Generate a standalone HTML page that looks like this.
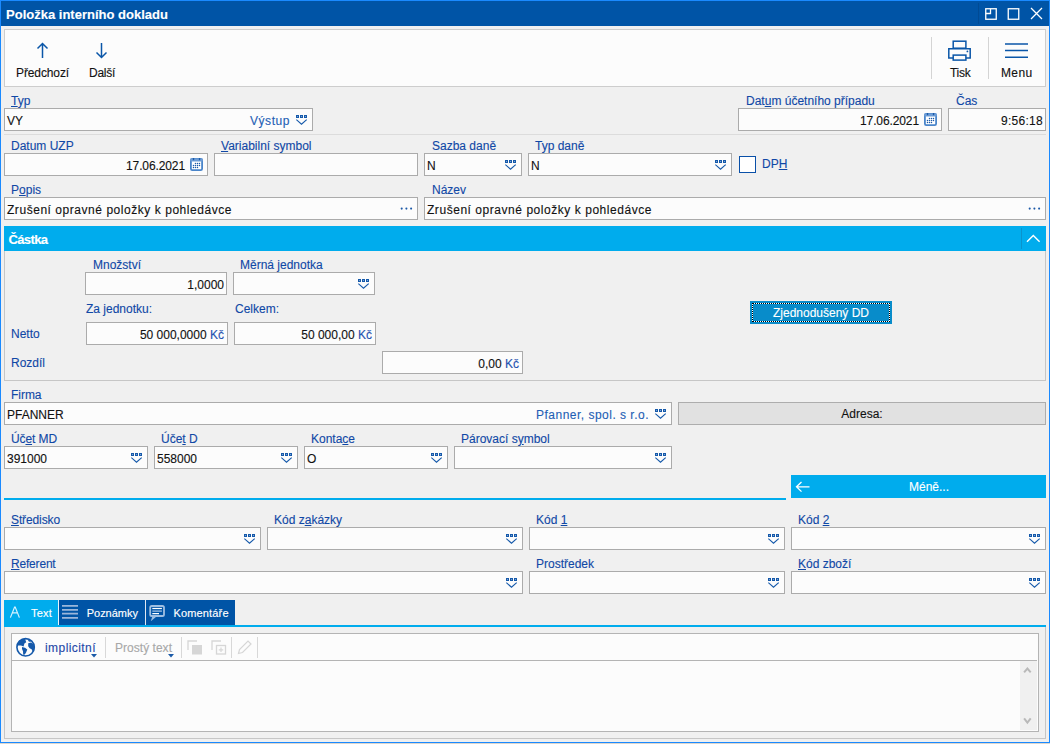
<!DOCTYPE html><html><head><meta charset="utf-8"><style>
html,body{margin:0;padding:0;width:1050px;height:744px;overflow:hidden;background:#f0f0f0;}
body{position:relative;font-family:"Liberation Sans", sans-serif;}
.a{position:absolute;box-sizing:border-box;}
.t{white-space:pre;-webkit-text-stroke:0.12px currentColor;}
u{text-decoration:underline;text-underline-offset:1px;}
</style></head><body>
<div class="a" style="left:0px;top:0px;width:1050px;height:743px;background:#f0f0f0;border:1px solid #1a8aff;"></div>
<div class="a" style="left:0px;top:743px;width:1050px;height:1px;background:#ddd6cd;"></div>
<div class="a" style="left:1px;top:1px;width:1048px;height:25px;background:#0054a6;"></div>
<div class="a t" style="letter-spacing:0.008px;top:7.50px;font-size:13px;line-height:13px;color:#fff;font-weight:bold;left:6px;">Položka interního dokladu</div>
<div class="a" style="left:978px;top:3px;width:1px;height:21px;background:#004a94;"></div>
<svg class="a" style="left:985px;top:8px;" width="12" height="12" viewBox="0 0 12 12"><rect x="0.75" y="0.75" width="10.5" height="10.5" fill="none" stroke="#fff" stroke-width="1.3"/><path d="M0.75 5.5 H5.5 V0.75" fill="none" stroke="#fff" stroke-width="1.3"/></svg>
<svg class="a" style="left:1007px;top:8px;" width="13" height="12" viewBox="0 0 13 12"><rect x="1.25" y="0.75" width="10.5" height="10.5" fill="none" stroke="#fff" stroke-width="1.3"/></svg>
<svg class="a" style="left:1030px;top:7px;" width="13" height="13" viewBox="0 0 13 13"><path d="M1 1 L12 12 M12 1 L1 12" stroke="#fff" stroke-width="1.3"/></svg>
<div class="a" style="left:4px;top:29px;width:1042px;height:58px;background:#fcfcfc;border:1px solid #cdcdcd;"></div>
<svg class="a" style="left:36px;top:42px;" width="14" height="17" viewBox="0 0 14 17"><path d="M6.5 1.5 V16 M1.5 6.5 L6.5 1.5 L11.5 6.5" fill="none" stroke="#0a56a8" stroke-width="1.5"/></svg>
<svg class="a" style="left:95px;top:42px;" width="14" height="17" viewBox="0 0 14 17"><path d="M6.5 1 V15.5 M1.5 10.5 L6.5 15.5 L11.5 10.5" fill="none" stroke="#0a56a8" stroke-width="1.5"/></svg>
<div class="a t" style="letter-spacing:-0.115px;top:67.14px;font-size:12px;line-height:12px;color:#111;font-weight:normal;left:16px;">Předchozí</div>
<div class="a t" style="letter-spacing:-0.269px;top:67.14px;font-size:12px;line-height:12px;color:#111;font-weight:normal;left:89px;">Další</div>
<div class="a" style="left:931px;top:37px;width:1px;height:42px;background:#d4d4d4;"></div>
<div class="a" style="left:988px;top:37px;width:1px;height:42px;background:#d4d4d4;"></div>
<svg class="a" style="left:947px;top:39px;" width="25" height="23" viewBox="0 0 25 23"><g fill="none" stroke="#0a56a8" stroke-width="1.5"><rect x="6.2" y="2.2" width="12.7" height="7"/><path d="M6.2 18.9 H1.8 V9.7 H23.2 V18.9 H18.9"/><rect x="6.2" y="16.1" width="12.7" height="5"/></g><circle cx="20.4" cy="12.4" r="0.9" fill="#0a56a8"/></svg>
<svg class="a" style="left:1004px;top:42px;" width="25" height="17" viewBox="0 0 25 17"><g stroke="#0a56a8" stroke-width="1.5"><path d="M1 2 H24 M1 8.6 H24 M1 15.2 H24"/></g></svg>
<div class="a t" style="letter-spacing:-0.266px;top:67.14px;font-size:12px;line-height:12px;color:#111;font-weight:normal;left:950px;">Tisk</div>
<div class="a t" style="letter-spacing:0.367px;top:67.14px;font-size:12px;line-height:12px;color:#111;font-weight:normal;left:1001px;">Menu</div>
<div class="a t" style="top:94.84px;font-size:12px;line-height:12px;color:#1048a6;font-weight:normal;left:11px;"><u>T</u>yp</div>
<div class="a" style="left:4px;top:108px;width:309px;height:23px;background:#fcfcfc;border:1px solid #ababab;"></div>
<div class="a t" style="top:114.54px;font-size:12px;line-height:12px;color:#111;font-weight:normal;left:7px;">VY</div>
<div class="a t" style="letter-spacing:0.552px;top:114.54px;font-size:12px;line-height:12px;color:#1f5fb5;font-weight:normal;right:760px;">Výstup</div>
<svg class="a" style="left:296px;top:115px;" width="12" height="11" viewBox="0 0 12 11"><g fill="#1559aa"><rect x="0" y="0" width="3" height="3"/><rect x="4" y="0" width="3" height="3"/><rect x="8" y="0" width="3" height="3"/></g><g fill="#7aa3d6"><rect x="1" y="1" width="1" height="1"/><rect x="5" y="1" width="1" height="1"/><rect x="9" y="1" width="1" height="1"/></g><path d="M0.3 4.6 L5.5 9.3 L10.7 4.6" fill="none" stroke="#1559aa" stroke-width="1.15"/></svg>
<div class="a t" style="top:94.84px;font-size:12px;line-height:12px;color:#1048a6;font-weight:normal;left:746px;">Dat<u>u</u>m účetního případu</div>
<div class="a" style="left:738px;top:108px;width:204px;height:23px;background:#fcfcfc;border:1px solid #ababab;"></div>
<div class="a t" style="letter-spacing:-0.106px;top:114.54px;font-size:12px;line-height:12px;color:#111;font-weight:normal;right:131px;">17.06.2021</div>
<svg class="a" style="left:924px;top:113px;" width="13" height="13" viewBox="0 0 13 13"><rect x="0.9" y="0.9" width="11.2" height="11.2" rx="1.3" fill="#fff" stroke="#4a85ca" stroke-width="1.8"/><rect x="0.2" y="0.4" width="12.6" height="3.2" rx="1" fill="#6e9dd6"/><rect x="2.9" y="0" width="1.3" height="2.2" fill="#1d5ba8"/><rect x="8.9" y="0" width="1.3" height="2.2" fill="#1d5ba8"/><g fill="#1d5ba8"><circle cx="5.5" cy="5.5" r="0.72"/><circle cx="7.5" cy="5.5" r="0.72"/><circle cx="9.5" cy="5.5" r="0.72"/><circle cx="3.5" cy="7.5" r="0.72"/><circle cx="5.5" cy="7.5" r="0.72"/><circle cx="7.5" cy="7.5" r="0.72"/><circle cx="9.5" cy="7.5" r="0.72"/><circle cx="3.5" cy="9.5" r="0.72"/><circle cx="5.5" cy="9.5" r="0.72"/><circle cx="7.5" cy="9.5" r="0.72"/></g></svg>
<div class="a t" style="top:94.84px;font-size:12px;line-height:12px;color:#1048a6;font-weight:normal;left:956px;">Čas</div>
<div class="a" style="left:948px;top:108px;width:98px;height:23px;background:#fcfcfc;border:1px solid #ababab;"></div>
<div class="a t" style="letter-spacing:0.279px;top:114.54px;font-size:12px;line-height:12px;color:#111;font-weight:normal;right:7px;">9:56:18</div>
<div class="a" style="left:4px;top:134px;width:1042px;height:1px;background:#dcdcdc;"></div>
<div class="a t" style="top:139.84px;font-size:12px;line-height:12px;color:#1048a6;font-weight:normal;left:11px;">Datum UZP</div>
<div class="a" style="left:4px;top:153px;width:204px;height:23px;background:#fcfcfc;border:1px solid #ababab;"></div>
<div class="a t" style="letter-spacing:-0.106px;top:159.54px;font-size:12px;line-height:12px;color:#111;font-weight:normal;right:865px;">17.06.2021</div>
<svg class="a" style="left:190px;top:158px;" width="13" height="13" viewBox="0 0 13 13"><rect x="0.9" y="0.9" width="11.2" height="11.2" rx="1.3" fill="#fff" stroke="#4a85ca" stroke-width="1.8"/><rect x="0.2" y="0.4" width="12.6" height="3.2" rx="1" fill="#6e9dd6"/><rect x="2.9" y="0" width="1.3" height="2.2" fill="#1d5ba8"/><rect x="8.9" y="0" width="1.3" height="2.2" fill="#1d5ba8"/><g fill="#1d5ba8"><circle cx="5.5" cy="5.5" r="0.72"/><circle cx="7.5" cy="5.5" r="0.72"/><circle cx="9.5" cy="5.5" r="0.72"/><circle cx="3.5" cy="7.5" r="0.72"/><circle cx="5.5" cy="7.5" r="0.72"/><circle cx="7.5" cy="7.5" r="0.72"/><circle cx="9.5" cy="7.5" r="0.72"/><circle cx="3.5" cy="9.5" r="0.72"/><circle cx="5.5" cy="9.5" r="0.72"/><circle cx="7.5" cy="9.5" r="0.72"/></g></svg>
<div class="a t" style="top:139.84px;font-size:12px;line-height:12px;color:#1048a6;font-weight:normal;left:221px;"><u>V</u>ariabilní symbol</div>
<div class="a" style="left:214px;top:153px;width:204px;height:23px;background:#fcfcfc;border:1px solid #ababab;"></div>
<div class="a t" style="top:139.84px;font-size:12px;line-height:12px;color:#1048a6;font-weight:normal;left:432px;">Sazba daně</div>
<div class="a" style="left:424px;top:153px;width:98px;height:23px;background:#fcfcfc;border:1px solid #ababab;"></div>
<div class="a t" style="top:159.54px;font-size:12px;line-height:12px;color:#111;font-weight:normal;left:427px;">N</div>
<svg class="a" style="left:505px;top:160px;" width="12" height="11" viewBox="0 0 12 11"><g fill="#1559aa"><rect x="0" y="0" width="3" height="3"/><rect x="4" y="0" width="3" height="3"/><rect x="8" y="0" width="3" height="3"/></g><g fill="#7aa3d6"><rect x="1" y="1" width="1" height="1"/><rect x="5" y="1" width="1" height="1"/><rect x="9" y="1" width="1" height="1"/></g><path d="M0.3 4.6 L5.5 9.3 L10.7 4.6" fill="none" stroke="#1559aa" stroke-width="1.15"/></svg>
<div class="a t" style="top:139.84px;font-size:12px;line-height:12px;color:#1048a6;font-weight:normal;left:535px;">Typ daně</div>
<div class="a" style="left:528px;top:153px;width:204px;height:23px;background:#fcfcfc;border:1px solid #ababab;"></div>
<div class="a t" style="top:159.54px;font-size:12px;line-height:12px;color:#111;font-weight:normal;left:531px;">N</div>
<svg class="a" style="left:715px;top:160px;" width="12" height="11" viewBox="0 0 12 11"><g fill="#1559aa"><rect x="0" y="0" width="3" height="3"/><rect x="4" y="0" width="3" height="3"/><rect x="8" y="0" width="3" height="3"/></g><g fill="#7aa3d6"><rect x="1" y="1" width="1" height="1"/><rect x="5" y="1" width="1" height="1"/><rect x="9" y="1" width="1" height="1"/></g><path d="M0.3 4.6 L5.5 9.3 L10.7 4.6" fill="none" stroke="#1559aa" stroke-width="1.15"/></svg>
<div class="a" style="left:739px;top:156px;width:17px;height:17px;background:#fff;border:1px solid #0a50a8;"></div>
<div class="a t" style="top:158.44px;font-size:12px;line-height:12px;color:#1048a6;font-weight:normal;left:762px;">DP<u>H</u></div>
<div class="a t" style="top:184.14px;font-size:12px;line-height:12px;color:#1048a6;font-weight:normal;left:11px;">P<u>o</u>pis</div>
<div class="a" style="left:4px;top:197px;width:414px;height:23px;background:#fcfcfc;border:1px solid #ababab;"></div>
<div class="a t" style="letter-spacing:0.543px;top:203.84px;font-size:12px;line-height:12px;color:#111;font-weight:normal;left:7px;">Zrušení opravné položky k pohledávce</div>
<svg class="a" style="left:400px;top:207px;" width="13" height="4" viewBox="0 0 13 4"><circle cx="1.70" cy="1.6" r="1.05" fill="#1d5aa8"/><circle cx="6.40" cy="1.6" r="1.05" fill="#1d5aa8"/><circle cx="11.10" cy="1.6" r="1.05" fill="#1d5aa8"/></svg>
<div class="a t" style="top:184.14px;font-size:12px;line-height:12px;color:#1048a6;font-weight:normal;left:432px;">Název</div>
<div class="a" style="left:424px;top:197px;width:622px;height:23px;background:#fcfcfc;border:1px solid #ababab;"></div>
<div class="a t" style="letter-spacing:0.543px;top:203.84px;font-size:12px;line-height:12px;color:#111;font-weight:normal;left:427px;">Zrušení opravné položky k pohledávce</div>
<svg class="a" style="left:1028px;top:207px;" width="13" height="4" viewBox="0 0 13 4"><circle cx="1.70" cy="1.6" r="1.05" fill="#1d5aa8"/><circle cx="6.40" cy="1.6" r="1.05" fill="#1d5aa8"/><circle cx="11.10" cy="1.6" r="1.05" fill="#1d5aa8"/></svg>
<div class="a" style="left:4px;top:226px;width:1042px;height:25px;background:#00aced;"></div>
<div class="a t" style="letter-spacing:-0.607px;top:232.70px;font-size:13px;line-height:13px;color:#fff;font-weight:bold;left:8.4px;">Částka</div>
<div class="a" style="left:1021px;top:228px;width:1px;height:21px;background:#0a93cc;"></div>
<svg class="a" style="left:1026px;top:234px;" width="15" height="9" viewBox="0 0 15 9"><path d="M1 7.8 L7.3 1.5 L13.6 7.8" fill="none" stroke="#fff" stroke-width="1.4"/></svg>
<div class="a" style="left:4px;top:251px;width:1042px;height:130px;box-sizing:border-box;border:1px solid #c6c6c6;border-top:none"></div>
<div class="a t" style="top:258.84px;font-size:12px;line-height:12px;color:#1048a6;font-weight:normal;left:93px;">Množství</div>
<div class="a" style="left:85px;top:272px;width:142px;height:23px;background:#fcfcfc;border:1px solid #ababab;"></div>
<div class="a t" style="top:278.84px;font-size:12px;line-height:12px;color:#111;font-weight:normal;right:826px;">1,0000</div>
<div class="a t" style="top:258.84px;font-size:12px;line-height:12px;color:#1048a6;font-weight:normal;left:240px;">Měrná jednotka</div>
<div class="a" style="left:233px;top:272px;width:142px;height:23px;background:#fcfcfc;border:1px solid #ababab;"></div>
<svg class="a" style="left:358px;top:279px;" width="12" height="11" viewBox="0 0 12 11"><g fill="#1559aa"><rect x="0" y="0" width="3" height="3"/><rect x="4" y="0" width="3" height="3"/><rect x="8" y="0" width="3" height="3"/></g><g fill="#7aa3d6"><rect x="1" y="1" width="1" height="1"/><rect x="5" y="1" width="1" height="1"/><rect x="9" y="1" width="1" height="1"/></g><path d="M0.3 4.6 L5.5 9.3 L10.7 4.6" fill="none" stroke="#1559aa" stroke-width="1.15"/></svg>
<div class="a t" style="top:302.84px;font-size:12px;line-height:12px;color:#1048a6;font-weight:normal;left:86px;">Za jednotku:</div>
<div class="a t" style="top:302.84px;font-size:12px;line-height:12px;color:#1048a6;font-weight:normal;left:235px;">Celkem:</div>
<div class="a t" style="top:327.84px;font-size:12px;line-height:12px;color:#1048a6;font-weight:normal;left:11px;">Netto</div>
<div class="a" style="left:86px;top:322px;width:142px;height:23px;background:#fcfcfc;border:1px solid #ababab;"></div>

<div class="a t" style="top:328.84px;font-size:12px;line-height:12px;color:#111;font-weight:normal;right:826px;">50 000,0000 <span style="color:#2452b0">Kč</span></div>
<div class="a" style="left:234px;top:322px;width:142px;height:23px;background:#fcfcfc;border:1px solid #ababab;"></div>
<div class="a t" style="top:328.84px;font-size:12px;line-height:12px;color:#111;font-weight:normal;right:678px;">50 000,00 <span style="color:#2452b0">Kč</span></div>
<div class="a t" style="top:356.84px;font-size:12px;line-height:12px;color:#1048a6;font-weight:normal;left:11px;">Rozdíl</div>
<div class="a" style="left:382px;top:351px;width:141px;height:23px;background:#fcfcfc;border:1px solid #ababab;"></div>
<div class="a t" style="top:357.84px;font-size:12px;line-height:12px;color:#111;font-weight:normal;right:531px;">0,00 <span style="color:#2452b0">Kč</span></div>
<div class="a" style="left:750px;top:301px;width:142px;height:23px;background:#088cca;"></div>
<div class="a" style="left:752px;top:303px;width:138px;height:19px;border:1px solid #fff"></div>
<div class="a" style="left:752px;top:303px;width:138px;height:19px;border:1px dotted #000"></div>
<div class="a t" style="letter-spacing:-0.004px;top:306.84px;font-size:12px;line-height:12px;color:#fff;font-weight:normal;left:821px;transform:translateX(-50%);">Zjednodušený DD</div>
<div class="a t" style="letter-spacing:-0.034px;top:388.54px;font-size:12px;line-height:12px;color:#1048a6;font-weight:normal;left:11px;">Firma</div>
<div class="a" style="left:4px;top:402px;width:668px;height:23px;background:#fcfcfc;border:1px solid #ababab;"></div>
<div class="a t" style="top:408.84px;font-size:12px;line-height:12px;color:#111;font-weight:normal;left:7px;">PFANNER</div>
<div class="a t" style="letter-spacing:0.489px;top:408.84px;font-size:12px;line-height:12px;color:#1f5fb5;font-weight:normal;right:401px;">Pfanner, spol. s r.o.</div>
<svg class="a" style="left:655px;top:409px;" width="12" height="11" viewBox="0 0 12 11"><g fill="#1559aa"><rect x="0" y="0" width="3" height="3"/><rect x="4" y="0" width="3" height="3"/><rect x="8" y="0" width="3" height="3"/></g><g fill="#7aa3d6"><rect x="1" y="1" width="1" height="1"/><rect x="5" y="1" width="1" height="1"/><rect x="9" y="1" width="1" height="1"/></g><path d="M0.3 4.6 L5.5 9.3 L10.7 4.6" fill="none" stroke="#1559aa" stroke-width="1.15"/></svg>
<div class="a" style="left:678px;top:402px;width:368px;height:23px;background:#e1e1e1;border:1px solid #adadad;"></div>
<div class="a t" style="top:407.84px;font-size:12px;line-height:12px;color:#111;font-weight:normal;left:862px;transform:translateX(-50%);">Adresa:</div>
<div class="a t" style="letter-spacing:-0.100px;top:433.24px;font-size:12px;line-height:12px;color:#1048a6;font-weight:normal;left:11px;">Úč<u>e</u>t MD</div>
<div class="a" style="left:4px;top:446px;width:144px;height:23px;background:#fcfcfc;border:1px solid #ababab;"></div>
<div class="a t" style="top:452.84px;font-size:12px;line-height:12px;color:#111;font-weight:normal;left:7px;">391000</div>
<svg class="a" style="left:131px;top:453px;" width="12" height="11" viewBox="0 0 12 11"><g fill="#1559aa"><rect x="0" y="0" width="3" height="3"/><rect x="4" y="0" width="3" height="3"/><rect x="8" y="0" width="3" height="3"/></g><g fill="#7aa3d6"><rect x="1" y="1" width="1" height="1"/><rect x="5" y="1" width="1" height="1"/><rect x="9" y="1" width="1" height="1"/></g><path d="M0.3 4.6 L5.5 9.3 L10.7 4.6" fill="none" stroke="#1559aa" stroke-width="1.15"/></svg>
<div class="a t" style="top:433.24px;font-size:12px;line-height:12px;color:#1048a6;font-weight:normal;left:161px;">Úče<u>t</u> D</div>
<div class="a" style="left:154px;top:446px;width:144px;height:23px;background:#fcfcfc;border:1px solid #ababab;"></div>
<div class="a t" style="top:452.84px;font-size:12px;line-height:12px;color:#111;font-weight:normal;left:157px;">558000</div>
<svg class="a" style="left:281px;top:453px;" width="12" height="11" viewBox="0 0 12 11"><g fill="#1559aa"><rect x="0" y="0" width="3" height="3"/><rect x="4" y="0" width="3" height="3"/><rect x="8" y="0" width="3" height="3"/></g><g fill="#7aa3d6"><rect x="1" y="1" width="1" height="1"/><rect x="5" y="1" width="1" height="1"/><rect x="9" y="1" width="1" height="1"/></g><path d="M0.3 4.6 L5.5 9.3 L10.7 4.6" fill="none" stroke="#1559aa" stroke-width="1.15"/></svg>
<div class="a t" style="top:433.24px;font-size:12px;line-height:12px;color:#1048a6;font-weight:normal;left:311px;">Konta<u>c</u>e</div>
<div class="a" style="left:304px;top:446px;width:144px;height:23px;background:#fcfcfc;border:1px solid #ababab;"></div>
<div class="a t" style="top:452.84px;font-size:12px;line-height:12px;color:#111;font-weight:normal;left:307px;">O</div>
<svg class="a" style="left:431px;top:453px;" width="12" height="11" viewBox="0 0 12 11"><g fill="#1559aa"><rect x="0" y="0" width="3" height="3"/><rect x="4" y="0" width="3" height="3"/><rect x="8" y="0" width="3" height="3"/></g><g fill="#7aa3d6"><rect x="1" y="1" width="1" height="1"/><rect x="5" y="1" width="1" height="1"/><rect x="9" y="1" width="1" height="1"/></g><path d="M0.3 4.6 L5.5 9.3 L10.7 4.6" fill="none" stroke="#1559aa" stroke-width="1.15"/></svg>
<div class="a t" style="top:433.24px;font-size:12px;line-height:12px;color:#1048a6;font-weight:normal;left:461px;">Párovací s<u>y</u>mbol</div>
<div class="a" style="left:454px;top:446px;width:218px;height:23px;background:#fcfcfc;border:1px solid #ababab;"></div>
<svg class="a" style="left:655px;top:453px;" width="12" height="11" viewBox="0 0 12 11"><g fill="#1559aa"><rect x="0" y="0" width="3" height="3"/><rect x="4" y="0" width="3" height="3"/><rect x="8" y="0" width="3" height="3"/></g><g fill="#7aa3d6"><rect x="1" y="1" width="1" height="1"/><rect x="5" y="1" width="1" height="1"/><rect x="9" y="1" width="1" height="1"/></g><path d="M0.3 4.6 L5.5 9.3 L10.7 4.6" fill="none" stroke="#1559aa" stroke-width="1.15"/></svg>
<div class="a" style="left:791px;top:475px;width:255px;height:23px;background:#00aced;"></div>
<svg class="a" style="left:795px;top:481px;" width="16" height="12" viewBox="0 0 16 12"><path d="M1.5 5.8 H14.5 M6.5 1 L1.5 5.8 L6.5 10.6" fill="none" stroke="#fff" stroke-width="1.3"/></svg>
<div class="a t" style="top:481.34px;font-size:12px;line-height:12px;color:#fff;font-weight:normal;left:929px;transform:translateX(-50%);">Méně...</div>
<div class="a" style="left:4px;top:498px;width:782px;height:2px;background:#00aced;"></div>
<div class="a t" style="letter-spacing:-0.116px;top:514.04px;font-size:12px;line-height:12px;color:#1048a6;font-weight:normal;left:11px;"><u>S</u>tředisko</div>
<div class="a" style="left:4px;top:527px;width:257px;height:23px;background:#fcfcfc;border:1px solid #ababab;"></div>
<svg class="a" style="left:244px;top:534px;" width="12" height="11" viewBox="0 0 12 11"><g fill="#1559aa"><rect x="0" y="0" width="3" height="3"/><rect x="4" y="0" width="3" height="3"/><rect x="8" y="0" width="3" height="3"/></g><g fill="#7aa3d6"><rect x="1" y="1" width="1" height="1"/><rect x="5" y="1" width="1" height="1"/><rect x="9" y="1" width="1" height="1"/></g><path d="M0.3 4.6 L5.5 9.3 L10.7 4.6" fill="none" stroke="#1559aa" stroke-width="1.15"/></svg>
<div class="a t" style="top:514.04px;font-size:12px;line-height:12px;color:#1048a6;font-weight:normal;left:274px;">Kód z<u>a</u>kázky</div>
<div class="a" style="left:267px;top:527px;width:256px;height:23px;background:#fcfcfc;border:1px solid #ababab;"></div>
<svg class="a" style="left:506px;top:534px;" width="12" height="11" viewBox="0 0 12 11"><g fill="#1559aa"><rect x="0" y="0" width="3" height="3"/><rect x="4" y="0" width="3" height="3"/><rect x="8" y="0" width="3" height="3"/></g><g fill="#7aa3d6"><rect x="1" y="1" width="1" height="1"/><rect x="5" y="1" width="1" height="1"/><rect x="9" y="1" width="1" height="1"/></g><path d="M0.3 4.6 L5.5 9.3 L10.7 4.6" fill="none" stroke="#1559aa" stroke-width="1.15"/></svg>
<div class="a t" style="top:514.04px;font-size:12px;line-height:12px;color:#1048a6;font-weight:normal;left:536px;">Kód <u>1</u></div>
<div class="a" style="left:529px;top:527px;width:256px;height:23px;background:#fcfcfc;border:1px solid #ababab;"></div>
<svg class="a" style="left:768px;top:534px;" width="12" height="11" viewBox="0 0 12 11"><g fill="#1559aa"><rect x="0" y="0" width="3" height="3"/><rect x="4" y="0" width="3" height="3"/><rect x="8" y="0" width="3" height="3"/></g><g fill="#7aa3d6"><rect x="1" y="1" width="1" height="1"/><rect x="5" y="1" width="1" height="1"/><rect x="9" y="1" width="1" height="1"/></g><path d="M0.3 4.6 L5.5 9.3 L10.7 4.6" fill="none" stroke="#1559aa" stroke-width="1.15"/></svg>
<div class="a t" style="top:514.04px;font-size:12px;line-height:12px;color:#1048a6;font-weight:normal;left:798px;">Kód <u>2</u></div>
<div class="a" style="left:791px;top:527px;width:255px;height:23px;background:#fcfcfc;border:1px solid #ababab;"></div>
<svg class="a" style="left:1029px;top:534px;" width="12" height="11" viewBox="0 0 12 11"><g fill="#1559aa"><rect x="0" y="0" width="3" height="3"/><rect x="4" y="0" width="3" height="3"/><rect x="8" y="0" width="3" height="3"/></g><g fill="#7aa3d6"><rect x="1" y="1" width="1" height="1"/><rect x="5" y="1" width="1" height="1"/><rect x="9" y="1" width="1" height="1"/></g><path d="M0.3 4.6 L5.5 9.3 L10.7 4.6" fill="none" stroke="#1559aa" stroke-width="1.15"/></svg>
<div class="a t" style="letter-spacing:-0.191px;top:558.14px;font-size:12px;line-height:12px;color:#1048a6;font-weight:normal;left:11px;"><u>R</u>eferent</div>
<div class="a" style="left:4px;top:571px;width:519px;height:23px;background:#fcfcfc;border:1px solid #ababab;"></div>
<svg class="a" style="left:506px;top:578px;" width="12" height="11" viewBox="0 0 12 11"><g fill="#1559aa"><rect x="0" y="0" width="3" height="3"/><rect x="4" y="0" width="3" height="3"/><rect x="8" y="0" width="3" height="3"/></g><g fill="#7aa3d6"><rect x="1" y="1" width="1" height="1"/><rect x="5" y="1" width="1" height="1"/><rect x="9" y="1" width="1" height="1"/></g><path d="M0.3 4.6 L5.5 9.3 L10.7 4.6" fill="none" stroke="#1559aa" stroke-width="1.15"/></svg>
<div class="a t" style="top:558.14px;font-size:12px;line-height:12px;color:#1048a6;font-weight:normal;left:536px;">Prostředek</div>
<div class="a" style="left:529px;top:571px;width:256px;height:23px;background:#fcfcfc;border:1px solid #ababab;"></div>
<svg class="a" style="left:768px;top:578px;" width="12" height="11" viewBox="0 0 12 11"><g fill="#1559aa"><rect x="0" y="0" width="3" height="3"/><rect x="4" y="0" width="3" height="3"/><rect x="8" y="0" width="3" height="3"/></g><g fill="#7aa3d6"><rect x="1" y="1" width="1" height="1"/><rect x="5" y="1" width="1" height="1"/><rect x="9" y="1" width="1" height="1"/></g><path d="M0.3 4.6 L5.5 9.3 L10.7 4.6" fill="none" stroke="#1559aa" stroke-width="1.15"/></svg>
<div class="a t" style="top:558.14px;font-size:12px;line-height:12px;color:#1048a6;font-weight:normal;left:798px;"><u>K</u>ód zboží</div>
<div class="a" style="left:791px;top:571px;width:255px;height:23px;background:#fcfcfc;border:1px solid #ababab;"></div>
<svg class="a" style="left:1029px;top:578px;" width="12" height="11" viewBox="0 0 12 11"><g fill="#1559aa"><rect x="0" y="0" width="3" height="3"/><rect x="4" y="0" width="3" height="3"/><rect x="8" y="0" width="3" height="3"/></g><g fill="#7aa3d6"><rect x="1" y="1" width="1" height="1"/><rect x="5" y="1" width="1" height="1"/><rect x="9" y="1" width="1" height="1"/></g><path d="M0.3 4.6 L5.5 9.3 L10.7 4.6" fill="none" stroke="#1559aa" stroke-width="1.15"/></svg>
<div class="a" style="left:4px;top:600px;width:54px;height:25px;background:#00aced;"></div>
<div class="a" style="left:58px;top:600px;width:1px;height:25px;background:#e8f4fb;"></div>
<div class="a" style="left:59px;top:600px;width:87px;height:25px;background:#0054a6;"></div>
<div class="a" style="left:145px;top:600px;width:1px;height:25px;background:#dfe8f2;"></div>
<div class="a" style="left:146px;top:600px;width:89px;height:25px;background:#0054a6;"></div>
<div class="a" style="left:4px;top:625px;width:1042px;height:2px;background:#00aced;"></div>
<svg class="a" style="left:9px;top:605px;" width="13" height="15" viewBox="0 0 13 15"><path d="M1.4 12.6 L5.6 2 H6.2 L10.4 12.6 M3.4 7.9 H8.4" fill="none" stroke="#d6f2ff" stroke-width="1.2"/></svg>
<div class="a t" style="letter-spacing:0.203px;top:608.29px;font-size:11px;line-height:11px;color:#fff;font-weight:normal;left:31px;-webkit-text-stroke:0.15px #fff;">Text</div>
<svg class="a" style="left:62px;top:604px;" width="17" height="16" viewBox="0 0 17 16"><g stroke="#9bb6da" stroke-width="1.7"><path d="M0 1.8 H16 M0 5.9 H16 M0 9.7 H16 M0 13.8 H16"/></g></svg>
<div class="a t" style="letter-spacing:-0.007px;top:608.29px;font-size:11px;line-height:11px;color:#fff;font-weight:normal;left:86.7px;-webkit-text-stroke:0.15px #fff;">Poznámky</div>
<svg class="a" style="left:148px;top:604px;" width="19" height="17" viewBox="0 0 19 17"><g fill="none" stroke="#9fbfe2" stroke-width="1.8"><rect x="2.2" y="2" width="13.8" height="10" rx="1.6"/><path d="M5.6 11.6 L4.6 14.6 L8 11.8"/></g><g stroke-width="1.25"><path d="M4.3 4.5 H13.9" stroke="#fff"/><path d="M4.3 7.1 H13.9" stroke="#a9c6e6"/><path d="M4.3 9.6 H11" stroke="#fff"/></g></svg>
<div class="a t" style="letter-spacing:0.165px;top:608.29px;font-size:11px;line-height:11px;color:#fff;font-weight:normal;left:173.4px;-webkit-text-stroke:0.15px #fff;">Komentáře</div>
<div class="a" style="left:4px;top:627px;width:1042px;height:112px;box-sizing:border-box;border:1px solid #c6c6c6;border-top:none"></div>
<div class="a" style="left:11px;top:633px;width:1028px;height:99px;background:#fcfcfc;border:1px solid #b4b4b4;"></div>
<div class="a" style="left:12px;top:660px;width:1025px;height:1px;background:#b4b4b4;"></div>
<svg class="a" style="left:15px;top:637px;" width="22" height="22" viewBox="0 0 22 22"><circle cx="10.6" cy="10.3" r="8.7" fill="#fcfcfc" stroke="#1559aa" stroke-width="1.6"/><g fill="#1559aa"><path d="M2 8.3 C2.5 5 5.5 2 10.3 1.6 L10.6 3.6 L11.2 5.2 L9.4 6.6 L8.6 9.6 L6 8.6 L2.4 8.4 Z"/><path d="M7 10 L10 10.8 L12.3 12.6 L11.2 15.2 L9.8 17.6 L8.2 17.8 L8 14.2 L7 12 Z"/><path d="M13.2 6.2 L16 5.6 L18.6 7.2 L19.6 10.6 L19 14 L17.6 14.2 L16.6 12.2 L14.6 11.2 L13.2 9.2 Z"/><path d="M12.6 2.4 L15.2 3.2 L16.4 4.6 L14 4.8 Z"/></g></svg>
<div class="a t" style="letter-spacing:0.431px;top:641.54px;font-size:12px;line-height:12px;color:#2447a8;font-weight:normal;left:45px;">implicitní</div>
<svg class="a" style="left:91px;top:654px;" width="7" height="4" viewBox="0 0 7 4"><path d="M0 0 H6 L3 3.5 Z" fill="#1a5aa8"/></svg>
<div class="a" style="left:105px;top:637px;width:1px;height:21px;background:#d8d8d8;"></div>
<div class="a t" style="letter-spacing:0.028px;top:641.54px;font-size:12px;line-height:12px;color:#a8a8a8;font-weight:normal;left:115px;">Prostý text</div>
<svg class="a" style="left:168px;top:654px;" width="7" height="4" viewBox="0 0 7 4"><path d="M0 0 H6 L3 3.5 Z" fill="#1a5aa8"/></svg>
<div class="a" style="left:181px;top:637px;width:1px;height:21px;background:#d8d8d8;"></div>
<svg class="a" style="left:187px;top:640px;" width="16" height="15" viewBox="0 0 16 15"><path d="M1 10 V1 H10" fill="none" stroke="#d6d6d6" stroke-width="1.3"/><rect x="5" y="5" width="10" height="9.5" fill="#d6d6d6"/></svg>
<svg class="a" style="left:211px;top:640px;" width="16" height="15" viewBox="0 0 16 15"><path d="M1 10 V1 H10" fill="none" stroke="#d6d6d6" stroke-width="1.3"/><rect x="5.5" y="5.5" width="9" height="8.5" fill="none" stroke="#d6d6d6" stroke-width="1.3"/><path d="M10 7.5 V12 M7.8 9.8 H12.2" stroke="#d6d6d6" stroke-width="1.2"/></svg>
<div class="a" style="left:231px;top:637px;width:1px;height:21px;background:#d8d8d8;"></div>
<svg class="a" style="left:237px;top:640px;" width="16" height="15" viewBox="0 0 16 15"><path d="M1.5 13.5 L2.5 9.5 L11 1 L14 4 L5.5 12.5 Z" fill="none" stroke="#d6d6d6" stroke-width="1.2"/></svg>
<div class="a" style="left:257px;top:637px;width:1px;height:21px;background:#d8d8d8;"></div>
<div class="a" style="left:1020px;top:661px;width:17px;height:69px;background:#f0f0f0;"></div>
<svg class="a" style="left:1022px;top:664px;" width="12" height="11" viewBox="0 0 12 11"><path d="M2.1 8.4 L5.4 4.6 L8.7 8.4" fill="none" stroke="#b9b9b9" stroke-width="2"/></svg>
<svg class="a" style="left:1022px;top:716px;" width="12" height="10" viewBox="0 0 12 10"><path d="M2.1 2.4 L5.4 6.6 L8.7 2.4" fill="none" stroke="#b9b9b9" stroke-width="2"/></svg>
</body></html>
